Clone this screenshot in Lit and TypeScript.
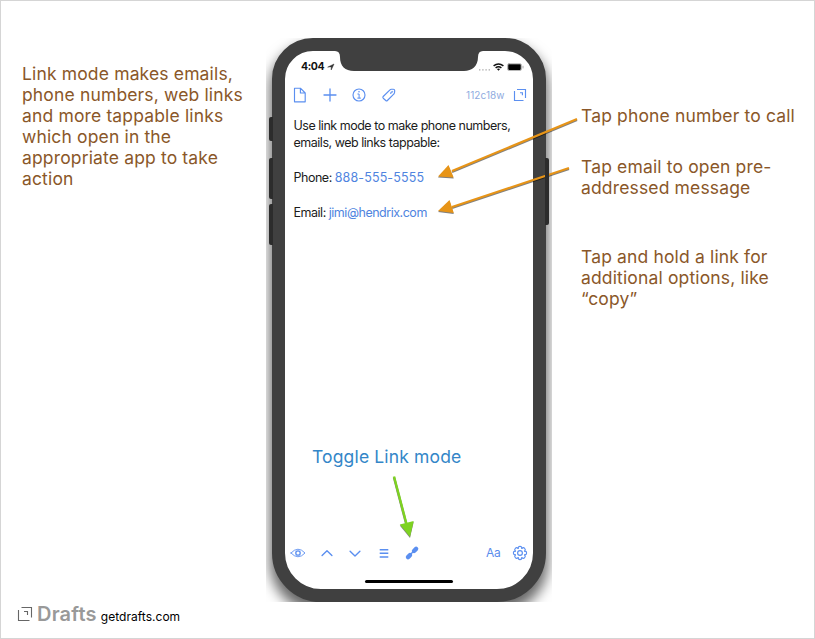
import { LitElement, html, svg, css } from "lit";
import { customElement } from "lit/decorators.js";

@customElement("phone-frame")
class PhoneFrame extends LitElement {
  static styles = css`
    :host { display: block; position: relative; width: 286px; height: 564px; overflow: hidden; }
    .body {
      box-sizing: border-box; width: 274px; height: 564px; margin-left: 6px;
      border: 13px solid #404040; border-radius: 41px 41px 49px 49px; background: #fff;
      position: relative; display: flex; flex-direction: column;
      box-shadow: 0 9px 13px 2px rgba(0, 0, 0, 0.6);
    }
    .key { position: absolute; z-index: 1; width: 4px; background: #2c2c2c; }
    .k1, .k2, .k3 { left: 2.5px; border-radius: 2px 0 0 2px; }
    .k1 { top: 79px; height: 24px; }
    .k2 { top: 120px; height: 41px; }
    .k3 { top: 166px; height: 41px; }
    .k4 { left: 279px; top: 120px; height: 67px; border-radius: 0 2px 2px 0; }
    .notch { position: absolute; left: 50px; top: -1px; width: 148px; height: 22px; }
    .status { height: 29px; display: flex; align-items: center; padding: 3px 9px 0 16px; box-sizing: border-box; }
    .clock { font: 700 10.5px/14px Inter, sans-serif; color: #111; letter-spacing: -0.4px; }
    .loc { width: 8px; height: 8px; margin-left: 3px; }
    .signals { width: 46px; height: 10px; margin-left: auto; }
    .tools { height: 30px; display: flex; align-items: center; padding: 0 4.5px 0 6px; box-sizing: border-box; }
    .tools svg { width: 18px; height: 18px; margin-right: 11.6px; flex: none; }
    .count { margin-left: auto; font: 400 10px/14px Inter, sans-serif; color: #8fabe0; letter-spacing: 0.05px; }
    .tools .drafts { margin: 0 0 0 6px; }
    .note { padding: 7px 0 0 8.5px; font: 400 12.5px/17.35px Inter, sans-serif; color: #1c1c1c; letter-spacing: -0.48px; white-space: nowrap; flex: 1; }
    .row { display: flex; margin-top: 17.35px; gap: 3px; }
    .link { color: #4f84e0; }
    .digits { letter-spacing: 0.12px; }
    .bottom { height: 30px; display: flex; align-items: center; padding: 0 4px; }
    .bottom svg { width: 18px; height: 18px; margin-right: 10.5px; flex: none; }
    .aa { margin-left: auto; font: 400 12px/16px Inter, sans-serif; color: #5a8cec; letter-spacing: -0.3px; }
    .bottom .gear { margin: 0 0 0 10.5px; }
    .home { width: 88px; height: 3px; border-radius: 2px; background: #000; margin: 12px auto 6px; }
    svg { display: block; fill: none; stroke: #5b8ff0; stroke-width: 1.15; stroke-linecap: round; stroke-linejoin: round; }
  `;
  render() {
    return html`
      <div class="key k1"></div><div class="key k2"></div><div class="key k3"></div><div class="key k4"></div>
      <div class="body">
        <svg class="notch" viewBox="0 0 148 22"><path stroke="none" fill="#404040" d="M0 0H148V1Q143 1 143 7C143 16 137 21 129 21H19C10 21 5 16 5 7Q5 1 0 1Z"/></svg>
        <div class="status">
          <span class="clock">4:04</span>
          <svg class="loc" viewBox="0 0 8 8"><path d="M1 4L7 1L4.2 7V4Z" fill="#333" stroke="#333" stroke-width=".5"/></svg>
          <svg class="signals" viewBox="0 0 46 10">
            <path d="M1 7.8h1.4M4.2 7.8h1.4M7.4 7.8h1.4M10.6 7.8h1.4" stroke="#aaa" stroke-width="1.3" stroke-linecap="butt"/>
            <path d="M15.6 3.9Q20.5 .1 25.4 3.9M17.6 5.9Q20.5 3.7 23.4 5.9" stroke="#111" stroke-width="1.5" stroke-linecap="butt"/>
            <path d="M18.9 7.1Q20.5 6 22.1 7.1L20.5 8.8Z" fill="#111" stroke="none"/>
            <rect x="29.5" y="1.7" width="14" height="6.8" rx="1.5" stroke="#999" stroke-width=".7"/>
            <rect x="30.2" y="2.3" width="12.6" height="5.6" rx=".8" fill="#000" stroke="none"/>
            <path d="M45 4.2v1.8" stroke="#999" stroke-width=".8"/>
          </svg>
        </div>
        <div class="tools">
          <svg viewBox="0 0 18 18"><path d="M3.5 2.2H9.4L14.2 7V15.8H3.5ZM9.4 2.2V7H14.2"/></svg>
          <svg viewBox="0 0 18 18"><path d="M9 3V15M3 9H15" stroke-width="1.3"/></svg>
          <svg viewBox="0 0 18 18"><circle cx="9" cy="9" r="6"/><path d="M7.8 8H9.1V12M7.7 12.1H10.5" stroke-width="1"/><circle cx="9" cy="5.8" r=".8" fill="#5b8ff0" stroke="none"/></svg>
          <svg viewBox="0 0 18 18"><path d="M3.2 10.5L9.7 4.1Q10.4 3.4 11.5 3.3L13.3 3.2Q14.7 3.2 14.7 4.5L14.6 6.3Q14.5 7.5 13.7 8.2L7.4 14.5Q6.6 15.2 5.8 14.5L3.2 12.2Q2.4 11.4 3.2 10.5Z"/><path d="M10.6 7.2Q10.7 5.2 12.8 5.3Q12.7 7.2 10.6 7.2Z" stroke-width=".8"/></svg>
          <span class="count">112c18w</span>
          <svg class="drafts" viewBox="0 0 18 18"><path d="M3.5 5V14.5H12.5M6 3.5H14.5V12M9 6.7H11.4V9.2" stroke-linecap="butt" stroke-linejoin="miter"/></svg>
        </div>
        <div class="note">
          <div>Use link mode to make phone numbers,</div>
          <div>emails, web links tappable:</div>
          <div class="row"><span>Phone:</span><span class="link digits">888-555-5555</span></div>
          <div class="row"><span>Email:</span><span class="link">jimi@hendrix.com</span></div>
        </div>
        <div class="bottom">
          <svg viewBox="0 0 18 18"><path d="M2 9Q9 1.3 16 9Q9 16.7 2 9Z" stroke-width=".9"/><circle cx="9" cy="9" r="2.2" stroke-width="1.3"/></svg>
          <svg viewBox="0 0 18 18"><path d="M4.1 11.4L9 6.7L13.9 11.4" stroke-width="1.4"/></svg>
          <svg viewBox="0 0 18 18"><path d="M4.1 7.3L9 12L13.9 7.3" stroke-width="1.4"/></svg>
          <svg viewBox="0 0 18 18"><path d="M4.7 5.7H13.3M4.7 9.3H13.3M4.7 12.9H13.3" stroke-width="1.5" stroke-linecap="butt"/></svg>
          <svg viewBox="0 0 18 18"><path d="M5 13.1L7 11.1M11 7L13.1 4.9" stroke-width="4.4"/><path d="M7.6 10.3L10.4 7.6" stroke-width="1.4"/></svg>
          <span class="aa">Aa</span>
          <svg class="gear" viewBox="0 0 18 18">
            <circle cx="9" cy="9" r="2.4"/>
            ${[0, 45, 90, 135, 180, 225, 270, 315].map((a) => svg`<path d="M7.1 4.4Q7.1 2.4 9 2.4Q10.9 2.4 10.9 4.4" stroke-width="1.1" transform="rotate(${a} 9 9)"/>`)}
          </svg>
        </div>
        <div class="home"></div>
      </div>`;
  }
}

@customElement("app-root")
class AppRoot extends LitElement {
  static styles = css`
    :host {
      display: grid; grid-template-columns: 265px 286px 1fr; grid-template-rows: 601px 1fr;
      box-sizing: border-box; width: 815px; height: 639px; border: 1px solid #d5d5d5;
      background: #fff; position: relative; overflow: hidden;
    }
    .text { font: 400 17.5px/21px Inter, sans-serif; color: #8a5729; letter-spacing: 0.15px; white-space: pre; }
    .left { padding: 62px 0 0 21px; }
    .middle { padding-top: 37px; }
    .right { padding: 104px 0 0 29px; display: flex; flex-direction: column; }
    .second { margin-top: 30px; }
    .third { margin-top: 48px; }
    .toggle { position: absolute; left: 311px; top: 445px; color: #3386c8; }
    .arrows { position: absolute; left: -1px; top: -1px; width: 815px; height: 639px; filter: drop-shadow(0 1px 0.6px rgba(0, 0, 0, 0.5)); }
    .brand { grid-column: 1 / -1; display: flex; align-items: baseline; padding-left: 16px; }
    .mark { width: 16px; height: 16px; fill: none; stroke: #666; align-self: flex-start; margin-top: 4px; }
    .name { font: 600 20px/24px Inter, sans-serif; color: #999; margin-left: 4px; letter-spacing: 0.2px; }
    .url { font: 400 12px/16px Inter, sans-serif; color: #000; margin-left: 4px; letter-spacing: 0.03px; }
  `;
  render() {
    return html`
      <div class="text left">Link mode makes emails,
phone numbers, web links
and more tappable links
which open in the
appropriate app to take
action</div>
      <div class="middle"><phone-frame></phone-frame></div>
      <div class="right">
        <div class="text">Tap phone number to call</div>
        <div class="text second">Tap email to open pre-
addressed message</div>
        <div class="text third">Tap and hold a link for
additional options, like
“copy”</div>
      </div>
      <div class="brand">
        <svg class="mark" viewBox="0 0 16 16"><path d="M1.5 4V14.5H12.5M4.5 1.5H14.5V11.5M7 5.5H10.5V9" stroke-width="1.1"/></svg>
        <span class="name">Drafts</span><span class="url">getdrafts.com</span>
      </div>
      <div class="text toggle">Toggle Link mode</div>
      <svg class="arrows" viewBox="0 0 815 639">
        <g fill="#e79417" stroke="#e79417">
          <path d="M577 119L452 171" stroke-width="2.2"/><path d="M438 176.5L448.5 165L453.7 177.5Z" stroke="none"/>
          <path d="M569 168L452 207" stroke-width="2.2"/><path d="M438 211L449.5 200L453.8 213Z" stroke="none"/>
        </g>
        <g fill="#7ed321" stroke="#7ed321"><path d="M394 476.5L406.5 524" stroke-width="2.4"/><path d="M410 537L399.8 524.5L413.7 521Z" stroke="none"/></g>
      </svg>`;
  }
}
